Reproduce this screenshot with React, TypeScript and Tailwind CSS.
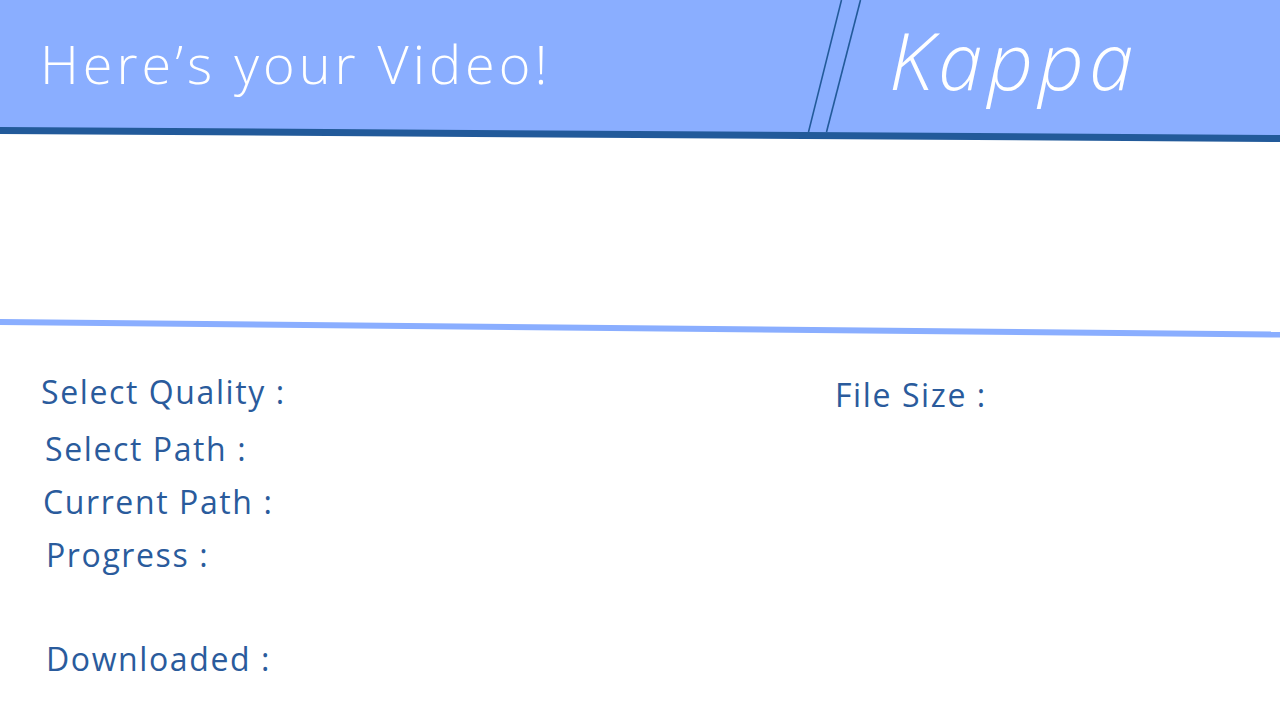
import React from "react";

const labelFont = { fontFamily: '"Open Sans", "Liberation Sans", sans-serif' };

// Left column rows: label, row height, left nudge
const leftRows = [
  { label: "Select Quality :", h: "h-[57px]", ml: "ml-[41px]" },
  { label: "Select Path :", h: "h-[53px]", ml: "ml-[45px]" },
  { label: "Current Path :", h: "h-[53px]", ml: "ml-[43px]" },
  { label: "Progress :", h: "h-[104px]", ml: "ml-[46px]" },
  { label: "Downloaded :", h: "h-[53px]", ml: "ml-[46px]" },
];

const App = () => {
  return (
    <div
      className="w-full h-[720px] bg-white overflow-hidden"
      style={labelFont}
    >
      {/* Header */}
      <div className="relative h-[142px]">
        <svg
          className="absolute inset-0 w-full h-full"
          viewBox="0 0 1280 142"
          preserveAspectRatio="none"
        >
          <polygon points="0,0 1280,0 1280,136 0,128" fill="#8aaeff" />
          <polygon points="0,127 1280,135 1280,142 0,134" fill="#225a9a" />
          <line x1="841.5" y1="0" x2="808.5" y2="132" stroke="#225a9a" strokeWidth="1.6" />
          <line x1="860.5" y1="0" x2="826.5" y2="132" stroke="#225a9a" strokeWidth="1.6" />
        </svg>
        <div className="relative flex items-start">
          <div className="flex-1 pl-[40px] pt-[36px] text-white text-[54px] font-light leading-none tracking-[4px]">
            Here’s your Video!
          </div>
          <div className="w-[392px] pt-[19px] pl-[1px] text-white text-[80px] font-light italic leading-none tracking-[5px]">
            Kappa
          </div>
        </div>
      </div>

      {/* Video area */}
      <div className="h-[174px]" />

      {/* Divider */}
      <svg className="block w-full h-[24px]" viewBox="0 0 1280 24" preserveAspectRatio="none">
        <polygon points="0,3 1280,15.5 1280,21.5 0,9" fill="#8aaeff" />
      </svg>

      {/* Details */}
      <div className="flex pt-[25px] text-[#2a5b9c] text-[32px] leading-[53px] tracking-[1.6px]">
        <div className="w-[835px] flex flex-col">
          {leftRows.map(row => (
            <div key={row.label} className={`${row.h} ${row.ml}`}>
              {row.label}
            </div>
          ))}
        </div>
        <div className="pt-[3px]">File Size :</div>
      </div>
    </div>
  );
};

export default App;
